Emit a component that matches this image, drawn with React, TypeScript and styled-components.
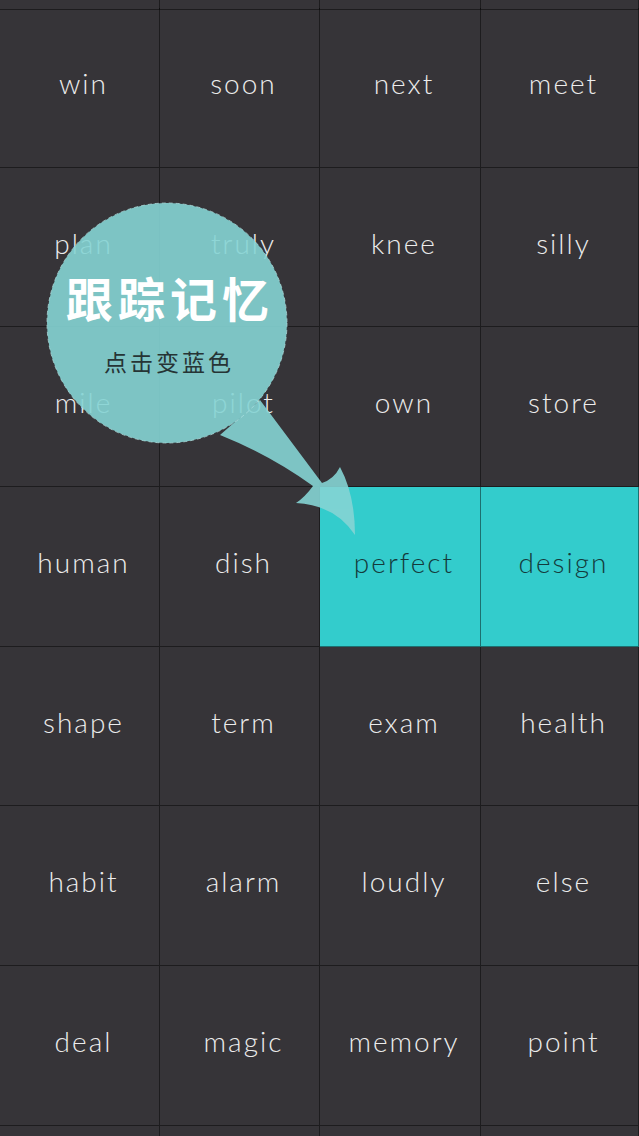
import React from "react";
import styled, { createGlobalStyle, css } from "styled-components";

const GlobalStyle = createGlobalStyle`
    html, body {
        margin: 0;
        padding: 0;
        background-color: #363438;
        overflow: hidden;
    }
`;

const Screen = styled.div`
    position: relative;
    width: 639px;
    height: 1136px;
    overflow: hidden;
    background-color: #363438;
    font-family: "Lato", "Open Sans", sans-serif;
`;

const Grid = styled.div`
    display: grid;
    grid-template-columns: 160px 160px 161px 158px;
    grid-auto-rows: 159.7px;
`;

const PeekRow = styled(Grid)`
    grid-auto-rows: 8px;
`;

interface CellProps {
    readonly active?: boolean;
}

const Cell = styled.div<CellProps>`
    display: flex;
    justify-content: center;
    align-items: center;
    box-sizing: border-box;
    padding: 0 0 9px 8px;
    border-right: 1px solid rgba(0, 0, 0, 0.45);
    border-bottom: 1px solid rgba(0, 0, 0, 0.45);
    color: #ececec;
    font-size: 28px;
    font-weight: 300;
    letter-spacing: 2px;
    ${props => props.active &&
        css`
            background-color: #33cccc;
            color: #143a3b;
        `}
`;

const Bubble = styled.div`
    position: absolute;
    left: 0;
    top: 0;
    width: 639px;
    height: 560px;
    pointer-events: none;
`;

const BubbleShape = styled.svg`
    position: absolute;
    left: 0;
    top: 0;
`;

const BubbleText = styled.div`
    position: absolute;
    left: 47px;
    top: 203px;
    width: 241px;
    height: 241px;
    display: flex;
    flex-direction: column;
    align-items: center;
    padding-top: 66px;
    box-sizing: border-box;
`;

const Title = styled.div`
    color: #ffffff;
    font-family: "Noto Sans CJK SC", sans-serif;
    font-weight: 700;
    font-size: 47px;
    line-height: 56px;
    letter-spacing: 5px;
    margin-left: 5px;
`;

const Subtitle = styled.div`
    margin-top: 21px;
    color: #263435;
    font-family: "Noto Sans CJK SC", sans-serif;
    font-weight: 400;
    font-size: 23px;
    line-height: 30px;
    letter-spacing: 3px;
    margin-left: 3px;
`;

const words = [
    ["win", "soon", "next", "meet"],
    ["plan", "truly", "knee", "silly"],
    ["mile", "pilot", "own", "store"],
    ["human", "dish", "perfect", "design"],
    ["shape", "term", "exam", "health"],
    ["habit", "alarm", "loudly", "else"],
    ["deal", "magic", "memory", "point"],
    ["", "", "", ""],
];

const active = new Set(["perfect", "design"]);

export default function App() {
    return (
        <Screen>
            <GlobalStyle />
            <PeekRow>
                {[0, 1, 2, 3].map(i => <Cell key={i} />)}
            </PeekRow>
            <Grid>
                {words.flat().map((w, i) => (
                    <Cell key={i} active={active.has(w)}>{w}</Cell>
                ))}
            </Grid>
            <Bubble>
                <BubbleShape width="639" height="560" viewBox="0 0 639 560">
                    <g opacity="0.9">
                        <circle cx="167" cy="323" r="120" fill="#85d4d4" />
                        <path
                            d="M 220 435 Q 270 455 313 486 Q 305 497 296 503 Q 335 505 355 535 Q 355 495 340 467 Q 334 479 322 483 L 260 400 Z"
                            fill="#85d4d4"
                        />
                    </g>
                    <circle
                        cx="167"
                        cy="323"
                        r="120"
                        fill="none"
                        stroke="#b5e6e6"
                        strokeWidth="1"
                        strokeDasharray="4 3"
                        opacity="0.7"
                    />
                </BubbleShape>
                <BubbleText>
                    <Title>跟踪记忆</Title>
                    <Subtitle>点击变蓝色</Subtitle>
                </BubbleText>
            </Bubble>
        </Screen>
    );
}
